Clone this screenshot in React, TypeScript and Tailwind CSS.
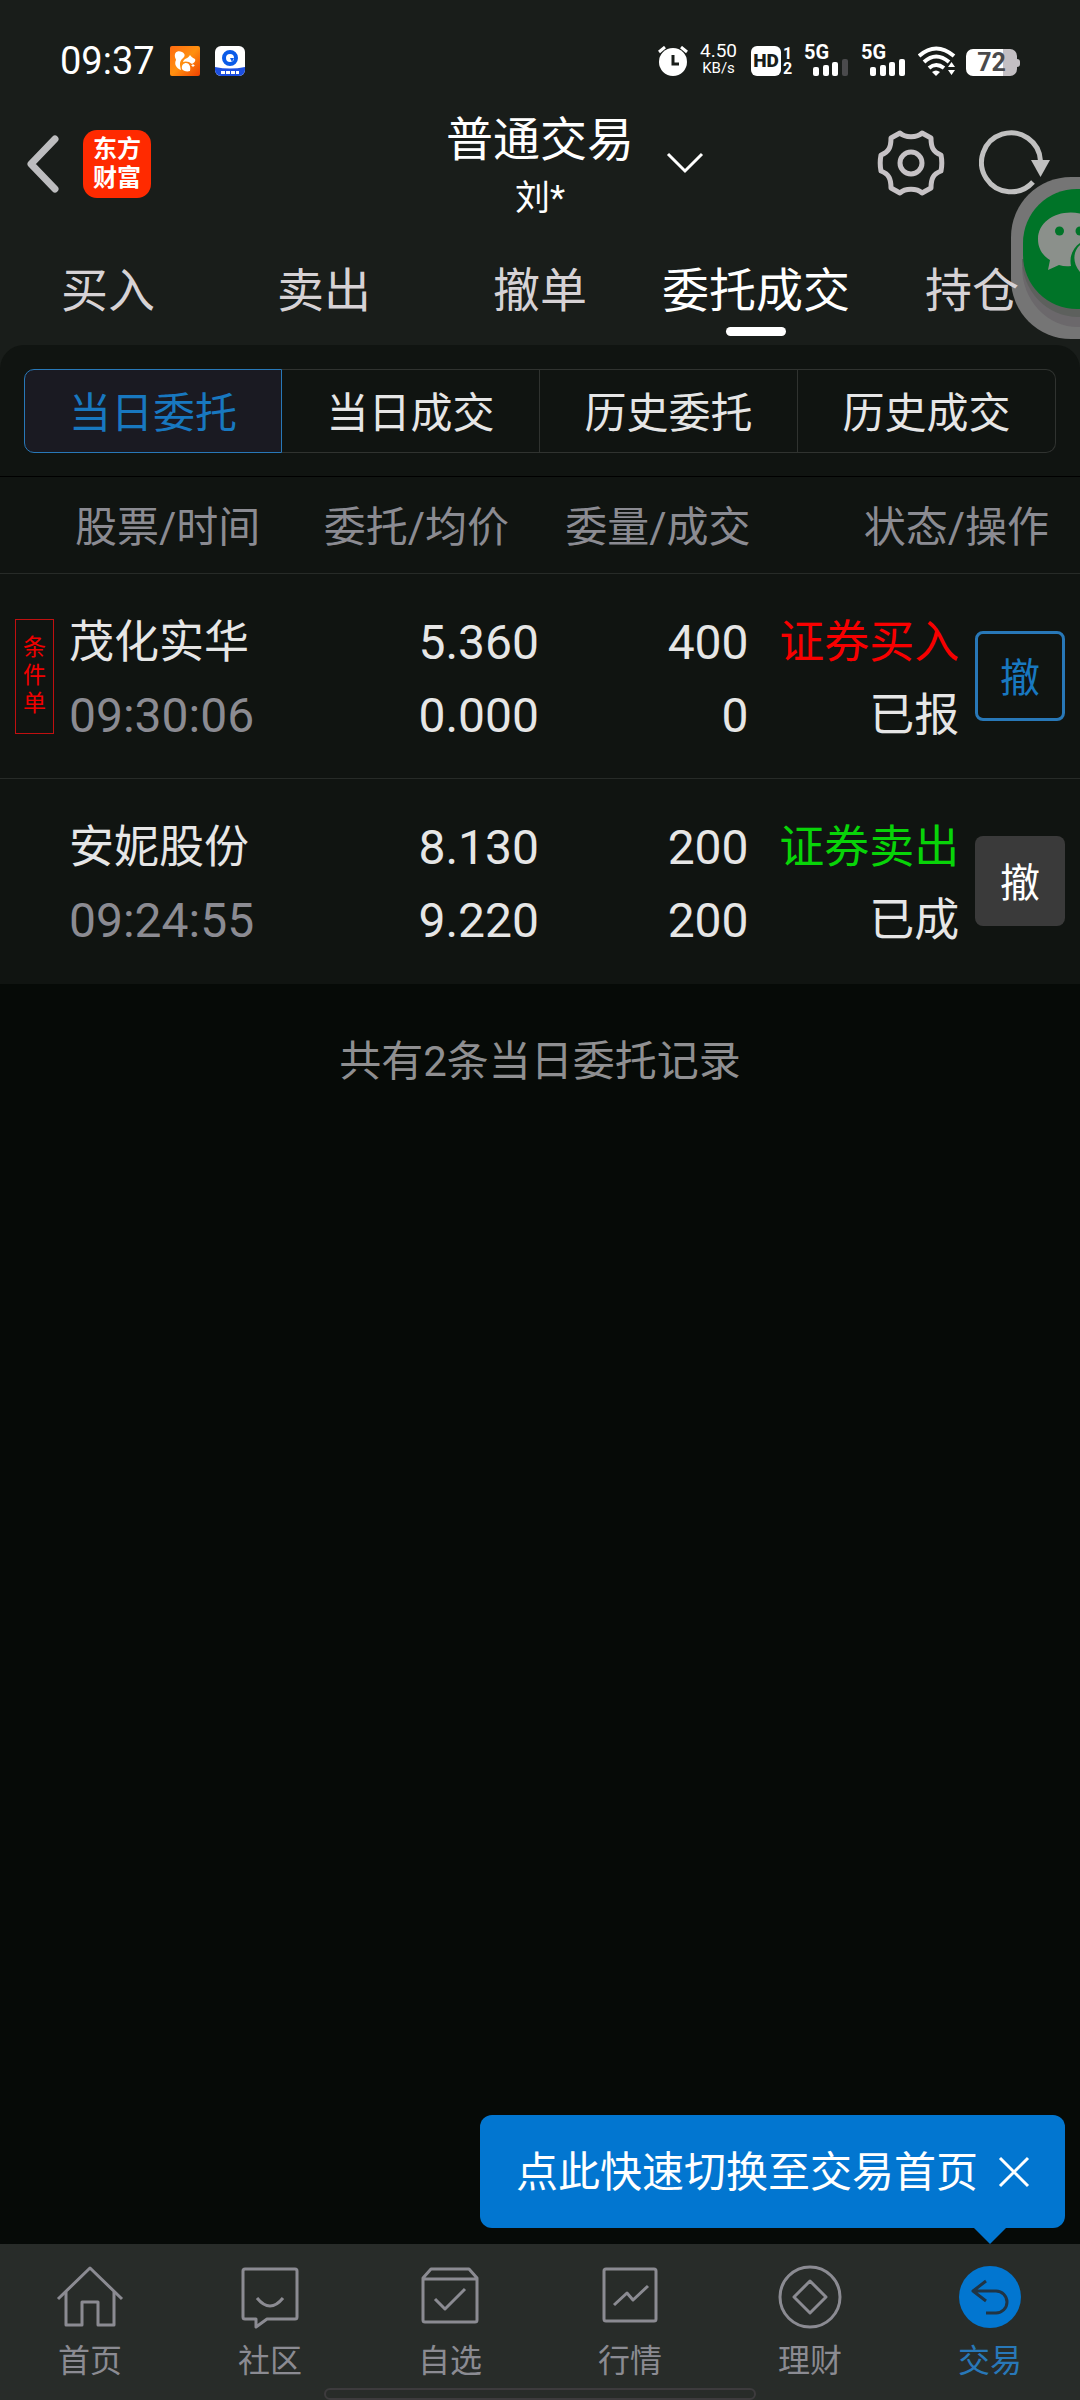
import React from "react";

const orders = [
  { flag: "条件单", name: "茂化实华", time: "09:30:06", price: "5.360", avg: "0.000", qty: "400", filled: "0", side: "证券买入", buy: true, status: "已报" },
  { flag: "", name: "安妮股份", time: "09:24:55", price: "8.130", avg: "9.220", qty: "200", filled: "200", side: "证券卖出", buy: false, status: "已成" },
];

function Signal({ weak }: { weak?: boolean }) {
  return (
    <div className="flex w-[46px] flex-col">
      <span className="h-[15px] text-[20px] leading-[15px] font-bold">5G</span>
      <svg viewBox="0 0 46 16" className="h-4 w-[46px] overflow-visible" aria-hidden="true">
        <g fill="#fff">
          <rect x="9" y="7" width="6" height="9" rx="2" />
          <rect x="19" y="5" width="6" height="11" rx="2" />
          <rect x="28" y="2" width="6" height="14" rx="2" />
          <rect x="38" y="-1" width="6" height="17" rx="2" fill={weak ? "#4a4a4c" : "#fff"} />
        </g>
      </svg>
    </div>
  );
}

function StatusBar() {
  return (
    <div className="flex h-[122px] items-center px-[60px] font-['Roboto',sans-serif] text-white">
      <span className="text-[38px] leading-[40px]">09:37</span>
      <svg viewBox="0 0 30 30" className="ml-[15px] h-[30px] w-[30px]" aria-hidden="true">
        <defs>
          <linearGradient id="orange" x1="0" y1="0" x2="1" y2="1">
            <stop offset="0" stopColor="#ff6a10" />
            <stop offset="0.5" stopColor="#ff9010" />
            <stop offset="1" stopColor="#f04000" />
          </linearGradient>
        </defs>
        <rect width="30" height="30" rx="2" fill="url(#orange)" />
        <path d="M5 11C4 6 8 4 12 6C16 8 15 11 12 13C9 16 10 20 11 24C6 22 4 18 6 14C6 13 5 12 5 11Z" fill="#fff" />
        <path d="M13 16C14 12 18 13 20 9C21 10 22 12 25 13C26 15 24 17 22 18C19 15 15 15 13 16Z" fill="#fff" />
        <path d="M12 23C11 19 14 17 16 17C19 17 21 20 20 25C17 26 13 25 12 23Z" fill="#fff" />
        <path d="M23 18V21M21.5 19.500H24.500" stroke="#fff" strokeWidth="1" />
      </svg>
      <svg viewBox="0 0 30 30" className="ml-[15px] h-[30px] w-[30px]" aria-hidden="true">
        <rect width="30" height="30" rx="6" fill="#fff" />
        <path d="M0 21Q15 24 30 21V24a6 6 0 0 1-6 6H6a6 6 0 0 1-6-6Z" fill="#1c4fe0" />
        <circle cx="15" cy="12" r="6" fill="none" stroke="#0a5be8" strokeWidth="4" />
        <path d="M15 12h4l-2 4Z" fill="#0a5be8" />
        <path d="M6 26.500H24" stroke="#fff" strokeWidth="3" strokeDasharray="4 1" />
      </svg>
      <div className="ml-auto flex h-[30px] items-end">
        <svg viewBox="0 0 30 30" className="h-[30px] w-[30px]" aria-hidden="true">
          <circle cx="15" cy="16" r="14" fill="#fff" />
          <path d="M1 6l6-5M29 6l-6-5" stroke="#fff" strokeWidth="3" />
          <path d="M15 9v9h6" fill="none" stroke="#191d1a" strokeWidth="3" />
        </svg>
        <div className="ml-[10px] flex w-[41px] flex-col items-center">
          <span className="text-[19px] leading-[18px]">4.50</span>
          <span className="text-[15px] leading-[16px]">KB/s</span>
        </div>
        <span className="ml-3 flex h-[30px] w-[30px] items-center justify-center rounded-[6px] bg-white text-[19px] font-black text-[#191d1a]">HD</span>
        <span className="ml-[2px] flex w-[10px] flex-col text-[16px] leading-[15px] font-bold">
          <span>1</span>
          <span>2</span>
        </span>
        <div className="ml-[11px]">
          <Signal weak />
        </div>
        <div className="ml-[11px]">
          <Signal />
        </div>
        <svg viewBox="0 0 38 30" className="ml-[11px] h-[30px] w-[38px]" aria-hidden="true">
          <g fill="none" stroke="#fff" strokeWidth="4">
            <path d="M1 10Q18-5 36 10" />
            <path d="M6 16Q18 5 31 16" />
            <path d="M11 22Q18 16 26 22" />
          </g>
          <path d="M14 26Q18 23 22 26L18 30Z" fill="#fff" />
          <path d="M30 21l3.500-5 3.500 5ZM30 24l3.500 5 3.500-5Z" fill="#fff" />
        </svg>
        <div className="ml-[10px] flex h-[27px] items-center">
          <span className="flex h-[27px] w-[51px] items-center justify-center rounded-[7px] bg-linear-to-r from-white from-72% to-[#c3bfc3] to-72% text-[25px] font-bold text-[#4a4a4c]">72</span>
          <span className="h-2 w-[3px] rounded-r bg-[#c3bfc3]" />
        </div>
      </div>
    </div>
  );
}

function Header() {
  return (
    <header className="grid h-[106px] grid-cols-[1fr_auto_1fr] items-start">
      <div className="flex items-center pt-[8px] pl-[26px]">
        <button type="button" aria-label="返回">
          <svg viewBox="0 0 34 60" className="h-[60px] w-[34px]" fill="none" stroke="#bdbdbf" strokeWidth="7" strokeLinecap="round" strokeLinejoin="round" aria-hidden="true">
            <path d="M29 5L5 30L29 55" />
          </svg>
        </button>
        <div className="ml-[23px] flex h-[68px] w-[68px] flex-col items-center justify-center rounded-[14px] bg-[#ff2a00] text-[24px] leading-[29px] font-bold text-white">
          <span>东方</span>
          <span>财富</span>
        </div>
      </div>
      <button type="button" className="relative flex flex-col items-center text-white">
        <span className="text-[47px] leading-[36px]">普通交易</span>
        <span className="mt-[21px] text-[35px] leading-[40px]">刘*</span>
        <svg viewBox="0 0 40 24" className="absolute top-[29px] left-full ml-[31px] h-6 w-10" fill="none" stroke="#fff" strokeWidth="3" aria-hidden="true">
          <path d="M3 3L20 20L37 3" />
        </svg>
      </button>
      <div className="flex justify-end gap-[34px] pt-[7px] pr-[28px]">
        <button type="button" aria-label="设置">
          <svg viewBox="0 0 68 68" className="h-[68px] w-[68px]" fill="none" stroke="#c6c2c5" strokeWidth="5" strokeLinejoin="round" aria-hidden="true">
            <circle cx="34" cy="34" r="11" />
            <path d="M23 4C28 9 40 9 45 4L54 9C54 18 56 23 64 26C65 31 65 37 64 42C56 45 54 50 54 59L45 64C40 59 28 59 23 64L14 59C14 50 12 45 4 42C3 37 3 31 4 26C12 23 14 18 14 9Z" />
          </svg>
        </button>
        <button type="button" aria-label="刷新">
          <svg viewBox="0 0 73 68" className="h-[68px] w-[73px]" aria-hidden="true">
            <path d="M54 53A29.500 29.500 0 1 1 61.500 32" fill="none" stroke="#c0c0c0" strokeWidth="5" />
            <path d="M52 31H71L61.500 48Z" fill="#c0c0c0" />
          </svg>
        </button>
      </div>
    </header>
  );
}

const tabs = ["买入", "卖出", "撤单", "委托成交", "持仓"];
const segments = ["当日委托", "当日成交", "历史委托", "历史成交"];

function Orders() {
  return (
    <table className="w-full table-fixed border-collapse">
      <colgroup>
        <col className="w-[27%]" />
        <col className="w-[23%]" />
        <col className="w-[19.500%]" />
        <col className="w-[19.500%]" />
        <col className="w-[11%]" />
      </colgroup>
      <thead>
        <tr className="h-[97px] border-t border-b border-t-black border-b-[#272b28] text-[42px] leading-[50px] text-[#8b8b92]">
          <th className="p-0 pt-1.5 pl-[75px] text-left font-normal">股票/时间</th>
          <th className="p-0 pt-1.5 pr-[31px] text-right font-normal">委托/均价</th>
          <th className="p-0 pt-1.5 text-right font-normal">委量/成交</th>
          <th colSpan={2} className="p-0 pt-1.5 pr-[31px] text-right font-normal">状态/操作</th>
        </tr>
      </thead>
      <tbody>
        {orders.map((o) => (
          <tr key={o.name} className="h-[205px] border-b border-[#272b28] text-[48px] leading-[73px] text-[#e6e6e6] last:border-b-0">
            <td className="p-0">
              <div className="flex items-center pl-[15px]">
                <div className="w-[39px] shrink-0">
                  {o.flag && (
                    <div className="flex h-[115px] flex-col items-center justify-center border border-[#c01010] text-[23px] leading-[28px] text-[#f00000]">
                      {[...o.flag].map((c) => (
                        <span key={c}>{c}</span>
                      ))}
                    </div>
                  )}
                </div>
                <div className="ml-[15px] pt-1.5">
                  <div className="text-[45px]">{o.name}</div>
                  <div className="text-[#8b8b92]">{o.time}</div>
                </div>
              </div>
            </td>
            <td className="p-0 pt-1.5 pr-px text-right">
              <div>{o.price}</div>
              <div>{o.avg}</div>
            </td>
            <td className="p-0 pt-1.5 pr-[2px] text-right">
              <div>{o.qty}</div>
              <div>{o.filled}</div>
            </td>
            <td className="p-0 pt-1.5 pr-[2px] text-right text-[45px]">
              <div className={o.buy ? "whitespace-nowrap text-[#f80000]" : "whitespace-nowrap text-[#08d408]"}>{o.side}</div>
              <div>{o.status}</div>
            </td>
            <td className="p-0 pr-[15px]">
              <button
                type="button"
                className={
                  o.buy
                    ? "ml-auto flex h-[90px] w-[90px] items-center justify-center rounded-[8px] border-3 border-[#2878b8] pt-1.5 text-[40px] leading-[40px] text-[#1878c0]"
                    : "ml-auto flex h-[90px] w-[90px] items-center justify-center rounded-[8px] bg-[#3a3a3a] pt-1.5 text-[40px] leading-[40px] text-white"
                }
              >
                撤
              </button>
            </td>
          </tr>
        ))}
      </tbody>
    </table>
  );
}

const navItems: { label: string; icon: React.ReactNode }[] = [
  { label: "首页", icon: <><path d="M3 35L35 4L67 35" /><path d="M11 28V61H27V38H43V61H59V28" /></> },
  { label: "社区", icon: <><path d="M10 5H60Q62 5 62 7V53Q62 55 60 55H32L21 63V55H10Q8 55 8 53V7Q8 5 10 5Z" /><path d="M22 34Q35 50 48 34" /></> },
  { label: "自选", icon: <><path d="M8 14L16 5H54L62 14V56Q62 58 60 58H10Q8 58 8 56ZM8 15H62" /><path d="M20 35L30 45L50 25" /></> },
  { label: "行情", icon: <><rect x="9" y="5" width="52" height="52" rx="2" /><path d="M19 41L32 29L38 36L53 22" /></> },
  { label: "理财", icon: <><circle cx="35" cy="33" r="30" /><path d="M35 17L51 33L35 49L19 33Z" /></> },
  { label: "交易", icon: <><circle cx="35" cy="33" r="31" fill="#0276d0" stroke="none" /><path d="M31 17L18 27L31 37M19 27H41A11 11 0 0 1 41 49H31" stroke="#203444" /></> },
];

export default function App() {
  return (
    <div className="flex min-h-screen flex-col overflow-hidden bg-[#060a07] font-['Roboto','Noto_Sans_CJK_SC',sans-serif]">
      <div className="relative bg-[#191d1a]">
        <StatusBar />
        <Header />
        <button type="button" aria-label="微信" className="absolute top-[177px] right-0">
          <svg viewBox="0 0 69 162" className="h-[162px] w-[69px]" aria-hidden="true">
            <path d="M69 0H60A60 60 0 0 0 0 60V102A60 60 0 0 0 60 162H69Z" fill="#757575" />
            <path d="M11 90A56 60 0 0 0 67 150H69V90Z" fill="#6b686b" />
            <path d="M11 82A56 58 0 0 0 67 140H69V82Z" fill="#5d605d" />
            <path d="M69 12H66A54 54 0 0 0 12 66V78A54 54 0 0 0 66 132H69Z" fill="#007428" />
            <path d="M69 36.500C47 32 27 44 27 62C27 71 31 78 39 83L37 93L48 88Q54 90 60 89C58 79 62 71 69 66Z" fill="#8b908b" />
            <circle cx="48.500" cy="54" r="4.500" fill="#007428" />
            <circle cx="69" cy="54" r="4.500" fill="#007428" />
            <path d="M69 68C62 74 61 86 69 95Z" fill="#8b908b" />
          </svg>
        </button>
        <nav className="relative grid h-[117px] grid-cols-5">
          {tabs.map((t) => (
            <button key={t} type="button" className={t === "委托成交" ? "relative flex flex-col items-center pt-[38px] text-[47px] leading-[50px] text-white" : "flex flex-col items-center pt-[38px] text-[47px] leading-[50px] text-[#d6d2d5]"}>
              {t}
              {t === "委托成交" && <span className="absolute bottom-[9px] h-[9px] w-[60px] rounded-full bg-white" />}
            </button>
          ))}
        </nav>
      </div>
      <main className="flex flex-1 flex-col">
        <div className="bg-[#191d1a]">
          <div className="rounded-t-[24px] bg-[#101411]">
            <div className="px-6 pt-6 pb-[23px]">
              <div className="grid h-[84px] grid-cols-4 text-[42px] leading-[50px]">
                {segments.map((s, i) => (
                  <button key={s} type="button" className={i === 0 ? "rounded-l-[10px] border border-[#2878b8] bg-[#1a1a22] pt-1.5 text-[#1878c0]" : "border border-l-0 border-[#303330] pt-1.5 text-[#e6e6e6] last:rounded-r-[10px]"}>
                    {s}
                  </button>
                ))}
              </div>
            </div>
            <Orders />
          </div>
        </div>
        <p className="mt-[53px] text-center text-[42px] leading-[50px] text-[#8f8f91]">共有2条当日委托记录</p>
      </main>
      <footer className="relative bg-[#282c29]">
        <div className="absolute right-[15px] bottom-full mb-[16px] flex h-[113px] items-center rounded-[12px] bg-[#0276d0] pr-[34px] pl-[36px] text-white">
          <span className="pt-0.5 text-[42px] leading-[50px] whitespace-nowrap">点此快速切换至交易首页</span>
          <button type="button" aria-label="关闭" className="ml-[19px]">
            <svg viewBox="0 0 34 34" className="h-[34px] w-[34px]" stroke="#fff" strokeWidth="3" aria-hidden="true">
              <path d="M3 3L31 31M31 3L3 31" />
            </svg>
          </button>
          <svg viewBox="0 0 32 16" className="absolute top-full right-[59px] h-4 w-8" aria-hidden="true">
            <path d="M0 0H32L16 16Z" fill="#0276d0" />
          </svg>
        </div>
        <nav className="grid h-[144px] grid-cols-6">
          {navItems.map((n) => (
            <a key={n.label} href="#" className={n.label === "交易" ? "flex flex-col items-center pt-5 text-[32px] leading-[40px] text-[#2878b8]" : "flex flex-col items-center pt-5 text-[32px] leading-[40px] text-[#8b8b92]"}>
              <svg viewBox="0 0 70 66" className="h-[66px] w-[70px]" fill="none" stroke="#8b8b92" strokeWidth="3" strokeLinejoin="round" aria-hidden="true">
                {n.icon}
              </svg>
              <span className="mt-[11px]">{n.label}</span>
            </a>
          ))}
        </nav>
        <div className="mx-auto h-3 w-[40%] rounded-full border-2 border-[#3d3b3d]" />
      </footer>
    </div>
  );
}
